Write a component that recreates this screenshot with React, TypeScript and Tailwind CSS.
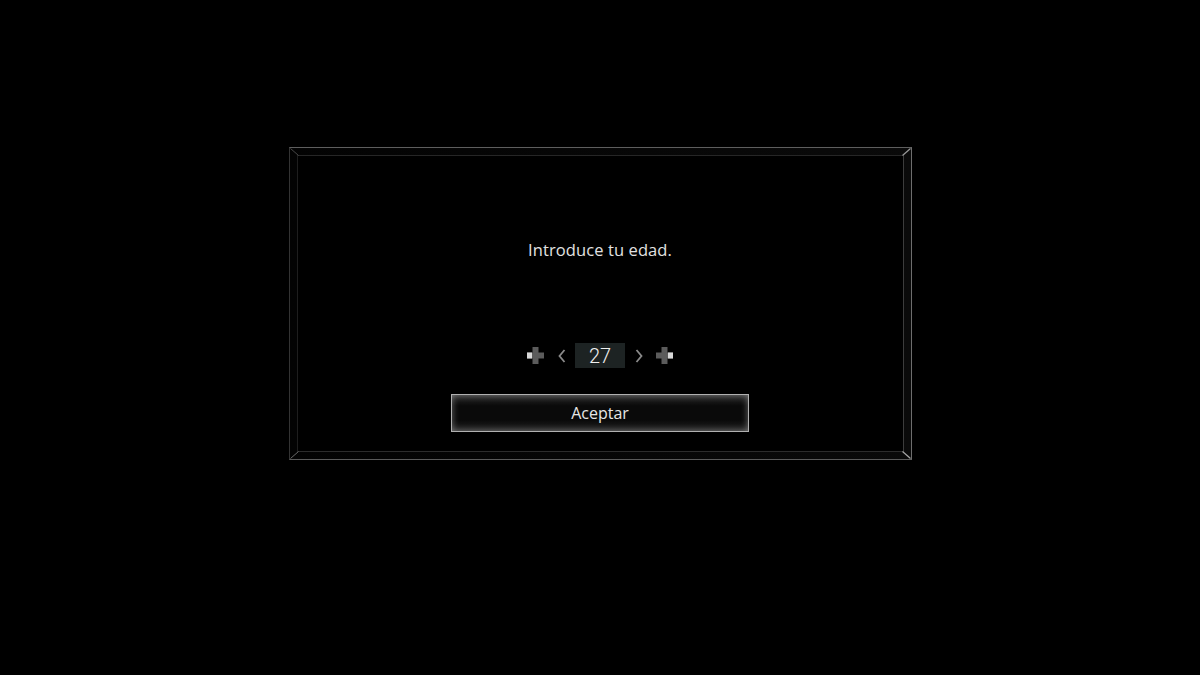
import { useState } from 'react';

function PlusIcon({ side }: { side: 'left' | 'right' }) {
  return (
    <svg width="17" height="17" viewBox="0 0 17 17" className="block">
      <rect x="5.5" y="0" width="6" height="17" fill="#5b5b5b" />
      <rect x="0" y="5.5" width="17" height="6" fill="#5b5b5b" />
      {side === 'left' ? (
        <rect x="0" y="5.5" width="5" height="6" fill="#d8d8d8" />
      ) : (
        <rect x="12" y="5.5" width="5" height="6" fill="#d8d8d8" />
      )}
    </svg>
  );
}

function Chevron({ dir }: { dir: 'left' | 'right' }) {
  return (
    <svg width="8" height="14" viewBox="0 0 8 14" className="block">
      <path
        d={dir === 'left' ? 'M6.5 1 L1.5 7 L6.5 13' : 'M1.5 1 L6.5 7 L1.5 13'}
        fill="none"
        stroke="#8a8a8a"
        strokeWidth="1.8"
      />
    </svg>
  );
}

// bevel lines joining the outer and inner frame at each corner
function FrameCorners() {
  return (
    <svg className="pointer-events-none absolute inset-0 h-full w-full" viewBox="0 0 623 313" preserveAspectRatio="none">
      <line x1="0.5" y1="0.5" x2="8.5" y2="7.5" stroke="#4a4a4a" strokeWidth="1" />
      <line x1="622.5" y1="0.5" x2="614.5" y2="7.5" stroke="#9a9a9a" strokeWidth="1.2" />
      <line x1="0.5" y1="312.5" x2="8.5" y2="305.5" stroke="#6a6a6a" strokeWidth="1" />
      <line x1="622.5" y1="312.5" x2="614.5" y2="305.5" stroke="#a8a8a8" strokeWidth="1.2" />
    </svg>
  );
}

export default function App() {
  const [age, setAge] = useState(27);

  return (
    <div className="flex h-[675px] w-full justify-center bg-black pt-[147px] font-['Open_Sans',sans-serif]">
      <div className="relative h-[313px] w-[623px] border border-t-[#5e5e5e] border-r-[#6e6e6e] border-b-[#5a5a5a] border-l-[#333] bg-[linear-gradient(90deg,#030303,#0a0a0a)] p-[7px]">
        <FrameCorners />
        <div className="flex h-full w-full flex-col items-center border border-t-[#262626] border-r-[#3c3c3c] border-b-[#2c2c2c] border-l-[#1e1e1e] bg-black pt-[82px]">
          <p className="text-[16.5px] leading-6 tracking-[0.1px] text-[#e2e2e2]">Introduce tu edad.</p>

          <div className="mt-[81px] flex items-center">
            <button type="button" onClick={() => setAge(age - 10)} className="mr-[14px]">
              <PlusIcon side="left" />
            </button>
            <button type="button" onClick={() => setAge(age - 1)} className="mr-[9px]">
              <Chevron dir="left" />
            </button>
            <div className="flex h-[25px] w-[50px] items-center justify-center bg-[#1d2323] font-['Roboto',sans-serif] text-[20px] font-light text-[#f0f0f0]">
              {age}
            </div>
            <button type="button" onClick={() => setAge(age + 1)} className="ml-[10px]">
              <Chevron dir="right" />
            </button>
            <button type="button" onClick={() => setAge(age + 10)} className="ml-[13px]">
              <PlusIcon side="right" />
            </button>
          </div>

          <button
            type="button"
            className="mt-[26px] h-[38px] w-[298px] border border-[#b0b0b0] bg-[linear-gradient(180deg,#2a2a2a,#0a0a0a_30%,#0a0a0a_70%,#222)] text-[16px] text-[#e6e6e6] shadow-[inset_0_0_7px_rgba(255,255,255,0.4)]"
          >
            Aceptar
          </button>
        </div>
      </div>
    </div>
  );
}
